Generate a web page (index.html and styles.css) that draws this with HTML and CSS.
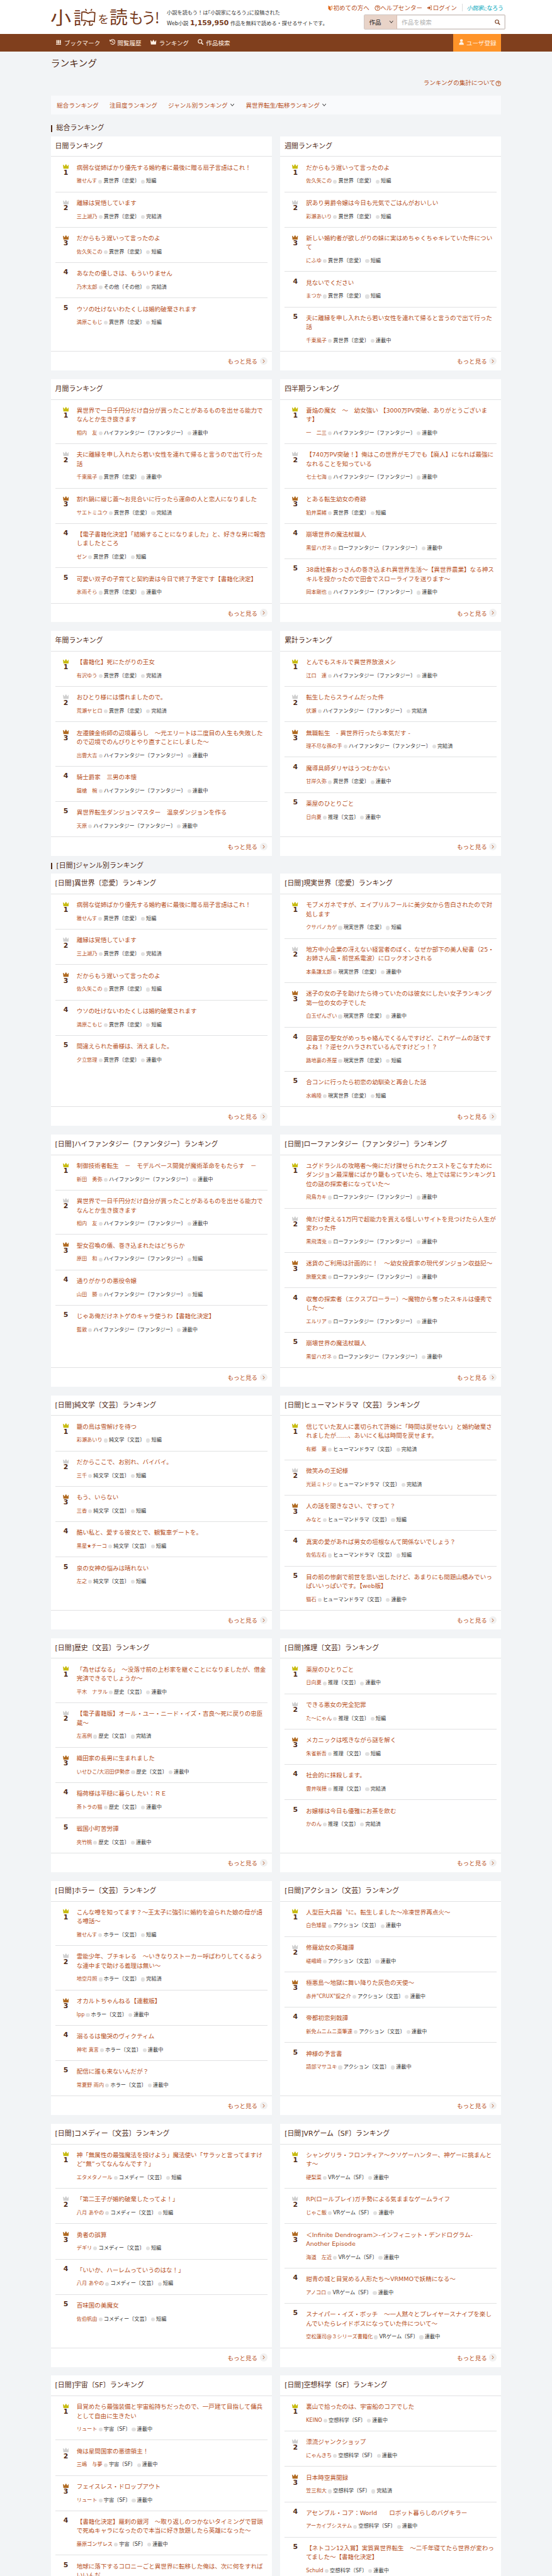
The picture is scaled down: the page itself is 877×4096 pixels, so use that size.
FILE: index.html
```html
<!DOCTYPE html>
<html lang="ja">
<head>
	<meta charset="utf-8">
	<title>ランキング | 小説を読もう！</title>
	<link rel="stylesheet" href="styles.css">
</head>
<body>
	<svg class="defs" width="0" height="0">
		<symbol id="crown" viewBox="0 0 14 11"><path d="M0 1.5h1.4L3.8 5 6.4.3h1.2L10.2 5l2.4-3.5H14L12.8 11H1.2z"/></symbol>
		<symbol id="down" viewBox="0 0 10 8"><path d="M1 1.5l4 5 4-5" fill="none" stroke="#222" stroke-width="1.4"/></symbol>
		<symbol id="right" viewBox="0 0 6 10"><path d="M1 1l3.5 4L1 9" fill="none" stroke="#b35322" stroke-width="1.4"/></symbol>
		<symbol id="search" viewBox="0 0 14 14"><circle cx="5.6" cy="5.6" r="4.3" fill="none" stroke="currentColor" stroke-width="1.7"/><path d="M8.8 8.8l4.2 4.2" stroke="currentColor" stroke-width="2.2"/></symbol>
		<symbol id="help" viewBox="0 0 14 14"><circle cx="7" cy="7" r="5.8" fill="none" stroke="currentColor" stroke-width="1.4"/><path d="M5 5.6C5 3 9 3 9 5.5 9 7 7 6.800 7 8.500M7 9.600v1.400" fill="none" stroke="currentColor" stroke-width="1.5"/></symbol>
	</svg>
	<div class="page">
		<div class="hd">
			<div class="inner">
				<svg class="logo" viewBox="18 40 754 126">
					<clipPath id="half"><path d="M174 40h51v126h-51z"/></clipPath>
					<text transform="translate(14 154) scale(1.16 1)" font-size="126">小</text>
					<text x="175" y="153" font-size="122" clip-path="url(#half)">説</text>
					<g class="book">
						<path d="M234 68q24-6 43 8 22-13 48-4l-4 62q-22-8-43 0-22-12-46-8zM259 46l7 12M304 46l-7 12M258 136q-1 18-14 26M288 136v23h12q8 0 8-11"/>
					</g>
					<text x="346" y="145" font-size="77">を</text>
					<text x="427" y="152" font-size="127">読</text>
					<text x="562 649 744" y="145" font-size="103">もう!</text>
				</svg>
				<div class="desc">
					<p>小説を読もう！は｢小説家になろう｣に投稿された</p>
					<p>Web小説 <strong>1,159,950</strong> 作品を無料で読める・探せるサイトです。</p>
				</div>
				<div class="tools">
					<div class="links">
						<a href="#"><svg viewBox="0 0 10 14"><path d="M0 1l5 3.500 5-3.500v9l-5 4-5-4z" fill="#e06a1c"/><path d="M5.800 5l3-2v6.400l-3 2.400z" fill="#fff"/></svg>初めての方へ</a>
						<a href="#"><svg class="wide"><use href="#help"/></svg>ヘルプセンター</a>
						<a href="#"><svg viewBox="0 0 12 12"><path d="M0 4.500h4V1.500L9 6l-5 4.500v-3H0z" fill="currentColor"/><path d="M7 1h4v10H7" fill="none" stroke="currentColor" stroke-width="1.500"/></svg>ログイン</a>
						<a href="#" class="narou"><i>小説家</i><small>に</small>なろう</a>
					</div>
					<div class="search">
						<span class="sel">作品<svg><use href="#down"/></svg></span>
						<span class="ph">作品を検索</span>
						<svg class="mag"><use href="#search"/></svg>
					</div>
				</div>
			</div>
		</div>
		<div class="nav">
			<div class="inner">
				<a href="#"><svg class="i1" viewBox="0 0 12 12"><path d="M1 1h2.600v8.500H1zM4.800 1h2.600v8.500H4.800zM8.600 1h2.600v8.500H8.600zM0 10.300h12V12H0z"/></svg>ブックマーク</a>
				<a href="#"><svg class="i2" viewBox="0 0 14 14"><path d="M2 4.500A5.600 5.600 0 1 1 2.500 10M0 1.500L1.500 5.500 5.500 4.500M7.300 3.800v3.700l2.500 1.500" fill="none" stroke="currentColor" stroke-width="1.500"/></svg>閲覧履歴</a>
				<a href="#"><svg class="i3"><use href="#crown"/></svg>ランキング</a>
				<a href="#"><svg class="i4"><use href="#search"/></svg>作品検索</a>
				<a href="#" class="user"><svg class="i5" viewBox="0 0 12 14"><circle cx="6" cy="3.600" r="3.300"/><path d="M.500 13.500q0-6 5.500-6t5.500 6z"/></svg>ユーザ登録</a>
			</div>
		</div>
		<div class="inner main">
			<h1>ランキング</h1>
			<p class="about"><a href="#">ランキングの集計について<svg><use href="#help"/></svg></a></p>
			<div class="tabs">
				<a href="#">総合ランキング</a>
				<a href="#">注目度ランキング</a>
				<a href="#">ジャンル別ランキング<svg><use href="#down"/></svg></a>
				<a href="#">異世界転生/転移ランキング<svg><use href="#down"/></svg></a>
			</div>
			<h2>総合ランキング</h2>
			<div class="cards" id="total"></div>
			<h2 class="second">[日間]ジャンル別ランキング</h2>
			<div class="cards" id="genre"></div>
		</div>
	</div>
	<script src="ranking.js"></script>
</body>
</html>
```
FILE: styles.css
```css
/* 1rem = 10 units of the 1284 wide layout */
html{
	font-size:6.827px;
}
body,h1,h2,h3,p,ol,li{
	margin:0;
	padding:0;
}
body{
	background-color:#f2f4f6;
	color:#333;
	font-family:"DejaVu Sans","Noto Sans CJK JP",sans-serif;
	font-size:1.4rem;
}
a{
	color:#b7501c;
	text-decoration:none;
}
svg{
	flex:none;
	fill:currentColor;
}
.defs{
	position:absolute;
}
.page{
	height:4096px;
	overflow:hidden;
}
.inner{
	width:104.8rem;
	margin:0 auto;
	display:flex;
}

/* header */
.hd{
	height:7.9rem;
	background-color:#fff;
}
.logo{
	width:25.1rem;
	height:4.2rem;
	margin-top:1.84rem;
	overflow:visible;
	fill:#773b1d;
	font-family:"Noto Sans CJK JP",sans-serif;
}
.book path{
	fill:none;
	stroke:#773b1d;
	stroke-width:8;
}
.desc{
	margin:1.7rem 0 0 1.9rem;
	font-size:1.2rem;
	line-height:2.6rem;
	white-space:nowrap;
}
.desc strong{
	font-size:1.6rem;
	line-height:1;
	color:#773b1d;
}
.tools{
	margin-left:auto;
}
.links{
	display:flex;
	justify-content:flex-end;
	align-items:center;
	height:1.8rem;
	margin-top:.9rem;
	white-space:nowrap;
}
.links a{
	display:flex;
	align-items:center;
	margin-right:1.15rem;
}
.links svg{
	width:1.1rem;
	height:1.3rem;
	margin-right:.2rem;
}
.links .wide{
	width:1.4rem;
	height:1.4rem;
	margin-right:0;
}
.links .narou{
	height:1.8rem;
	margin:0;
	padding-left:1rem;
	border-left:1px solid #ddd;
	color:#35b6c8;
	font-size:1.3rem;
	font-weight:500;
	width:9rem;
	letter-spacing:-.02em;
}
.narou small{
	font-size:.9rem;
	padding-top:.5rem;
}
.search{
	display:flex;
	align-items:center;
	box-sizing:border-box;
	width:33rem;
	height:3.5rem;
	margin:.7rem 0 0 auto;
	border:1px solid #cfc6c2;
	border-radius:2px;
	box-shadow:0 0 0 .5px #cfc6c2 inset;
}
.sel{
	display:flex;
	align-items:center;
	justify-content:space-between;
	box-sizing:border-box;
	width:7.7rem;
	height:100%;
	padding:0 .7rem 0 1.15rem;
	background-color:#e8d3c8;
	border-right:1px solid #d9bfb2;
	color:#222;
}
.sel svg{
	width:1.1rem;
	height:.8rem;
}
.ph{
	margin-left:1rem;
	color:#b0b0b0;
}
.mag{
	width:1.3rem;
	height:1.3rem;
	margin:0 1.1rem 0 auto;
	color:#773b1d;
}

/* navigation */
.nav{
	height:4.1rem;
	background-color:#803f1d;
}
.nav .inner{
	height:100%;
	align-items:center;
}
.nav a{
	display:flex;
	align-items:center;
	color:#fff1e4;
	margin-right:2.1rem;
}
.nav svg{
	width:1.4rem;
	height:1.4rem;
	margin:-.2rem .5rem 0 0;
}
.nav .i1{
	width:1.2rem;
	height:1.2rem;
	margin-left:1.2rem;
	margin-right:.7rem;
}
.nav .i3{
	height:1.2rem;
	margin-right:.6rem;
}
.nav .user{
	box-sizing:border-box;
	width:11.1rem;
	height:100%;
	margin:0 0 0 auto;
	padding-left:1.2rem;
	background-color:#ff9429;
}
.nav .i5{
	width:1.2rem;
	margin-right:.6rem;
}

/* page title and tabs */
.main{
	display:block;
}
h1{
	padding-top:1.2rem;
	font-size:2.16rem;
	line-height:3.2rem;
	font-weight:normal;
	color:#512b17;
}
.about{
	display:flex;
	justify-content:flex-end;
	margin-top:1.95rem;
	line-height:2.1rem;
}
.about a{
	display:flex;
	align-items:center;
}
.about svg{
	width:1.4rem;
	height:1.4rem;
}
.tabs{
	display:flex;
	gap:2.5rem;
	height:4.35rem;
	margin-top:1.8rem;
	padding-left:1.4rem;
	align-items:center;
	background-color:#f9fafc;
}
.tabs a{
	display:flex;
	align-items:center;
	white-space:nowrap;
}
.tabs svg{
	width:1.2rem;
	height:.8rem;
	margin-left:.5rem;
}
h2{
	margin:2.55rem 0 1.05rem;
	padding-left:1rem;
	border-left:.3rem solid #512b17;
	font-size:1.6rem;
	line-height:1.55rem;
	font-weight:normal;
	color:#512b17;
}
h2.second{
	margin-top:1.57rem;
	margin-bottom:1rem;
}

/* ranking cards */
.cards{
	display:grid;
	grid-template-columns:1fr 1fr;
	gap:2rem;
}
.card{
	display:flex;
	flex-direction:column;
	background-color:#fff;
}
.card h3{
	box-sizing:border-box;
	height:4.8rem;
	padding:0 1rem;
	border-bottom:1px solid #e1e2e3;
	font-size:1.6rem;
	line-height:4.6rem;
	font-weight:normal;
	color:#512b17;
}
.card ol{
	flex:1;
	list-style:none;
	padding:0 1rem;
}
.card li{
	display:flex;
	box-sizing:border-box;
	padding:1.5rem 0 1.61rem;
	border-bottom:1px solid #e1e2e3;
}
.card li:last-child{
	border-bottom:0;
}
.rank{
	width:5rem;
	flex:none;
	text-align:center;
	font-size:1.6rem;
	line-height:1.6rem;
	font-weight:bold;
	color:#512b17;
}
.rank svg{
	display:block;
	width:1.4rem;
	height:1.1rem;
	margin:.25rem auto .15rem;
}
.rank .c1{color:#c8bb10;}
.rank .c2{color:#cfcfcf;}
.rank .c3{color:#b06a20;}
.work{
	width:44.2rem;
}
.work a{
	display:block;
	line-height:2.1rem;
}
.work p{
	display:flex;
	align-items:center;
	margin-top:1.08rem;
	font-size:1.2rem;
	line-height:1.8rem;
	white-space:pre;
}
.work p a{
	line-height:1.8rem;
}
.work b{
	width:.9rem;
	height:.9rem;
	margin:.3rem .3rem 0;
	border-radius:50%;
	background-color:#e0e0e0;
}
.more{
	display:flex;
	align-items:center;
	justify-content:flex-end;
	box-sizing:border-box;
	height:4.53rem;
	padding-right:1rem;
	border-top:1px solid #e1e2e3;
}
.more span{
	display:flex;
	align-items:center;
	justify-content:center;
	width:1.8rem;
	height:1.8rem;
	margin-left:.5rem;
	border-radius:50%;
	background-color:#f1f1f1;
}
.more svg{
	width:.6rem;
	height:1rem;
}
```
FILE: ranking.js
```javascript
var R = "異世界〔恋愛〕", H = "ハイファンタジー〔ファンタジー〕", L = "ローファンタジー〔ファンタジー〕",
	T = "短編", K = "完結済", S = "連載中";

// [title, author, genre, status]
var total = [
	["日間ランキング",
		["病弱な従姉ばかり優先する婚約者に最後に贈る扇子言語はこれ！", "雅せんす", R, T],
		["離縁は覚悟しています", "三上湖乃", R, K],
		["だからもう遅いって言ったのよ", "佐久矢この", R, T],
		["あなたの優しさは、もういりません", "乃木太郎", "その他〔その他〕", K],
		["ウソの吐けないわたくしは婚約破棄されます", "満原こもじ", R, T]],
	["週間ランキング",
		["だからもう遅いって言ったのよ", "佐久矢この", R, T],
		["訳あり男爵令嬢は今日も元気でごはんがおいしい", "彩瀬あいり", R, T],
		["新しい婚約者が欲しがりの妹に実はめちゃくちゃキレていた件について", "にふゆ", R, T],
		["見ないでください", "まつか", R, T],
		["夫に離縁を申し入れたら若い女性を連れて帰ると言うので出て行った話", "千東風子", R, S]],
	["月間ランキング",
		["異世界で一日千円分だけ自分が買ったことがあるものを出せる能力でなんとか生き抜きます", "相内　友", H, S],
		["夫に離縁を申し入れたら若い女性を連れて帰ると言うので出て行った話", "千東風子", R, S],
		["割れ鍋に綴じ蓋～お見合いに行ったら運命の人と恋人になりました", "サエトミユウ", R, K],
		["【電子書籍化決定】「結婚することになりました」と、好きな男に報告しましたところ", "ゼン", R, T],
		["可愛い双子の子育てと契約妻は今日で終了予定です【書籍化決定】", "氷雨そら", R, S]],
	["四半期ランキング",
		["蒼焔の魔女　～　幼女強い 【3000万PV突破、ありがとうございます】", "一　二三", H, S],
		["【740万PV突破！】俺はこの世界がモブでも【廃人】になれば最強になれることを知っている", "七士七海", H, S],
		["とある転生幼女の奇跡", "狛井菜緒", R, T],
		["崩壊世界の魔法杖職人", "黒留ハガネ", L, S],
		["38歳社畜おっさんの巻き込まれ異世界生活～【異世界農業】なる神スキルを授かったので田舎でスローライフを送ります～", "岡本剛也", H, S]],
	["年間ランキング",
		["【書籍化】死にたがりの王女", "有沢ゆう", R, K],
		["おひとり様には慣れましたので。", "荒瀬ヤヒロ", R, K],
		["左遷錬金術師の辺境暮らし　～元エリートは二度目の人生も失敗したので辺境でのんびりとやり直すことにしました～", "出雲大吉", H, S],
		["騎士爵家　三男の本懐", "龍槍　椀", H, S],
		["異世界転生ダンジョンマスター　温泉ダンジョンを作る", "天原", H, S]],
	["累計ランキング",
		["とんでもスキルで異世界放浪メシ", "江口　連", H, S],
		["転生したらスライムだった件", "伏瀬", H, K],
		["無職転生　- 異世界行ったら本気だす -", "理不尽な孫の手", H, K],
		["魔導具師ダリヤはうつむかない", "甘岸久弥", R, S],
		["薬屋のひとりごと", "日向夏", "推理〔文芸〕", S]]
];

// genre cards: every work has the genre of its card, so [title, author, status]
var genre = [
	[R,
		["病弱な従姉ばかり優先する婚約者に最後に贈る扇子言語はこれ！", "雅せんす", T],
		["離縁は覚悟しています", "三上湖乃", K],
		["だからもう遅いって言ったのよ", "佐久矢この", T],
		["ウソの吐けないわたくしは婚約破棄されます", "満原こもじ", T],
		["間違えられた番様は、消えました。", "夕立悠理", S]],
	["現実世界〔恋愛〕",
		["モブメガネですが、エイプリルフールに美少女から告白されたので対処します", "クサバノカゲ", T],
		["地方中小企業の冴えない経営者のぼく、なぜか部下の美人秘書（25・お姉さん風・前世系電波）にロックオンされる", "本条謙太郎", S],
		["迷子の女の子を助けたら待っていたのは彼女にしたい女子ランキング第一位の女の子でした", "白玉ぜんざい", S],
		["図書室の聖女がめっちゃ絡んでくるんですけど、これゲームの話ですよね！？逆セクハラされているんですけどっ！？", "路地裏の茶屋", T],
		["合コンに行ったら初恋の幼馴染と再会した話", "水嶋陸", T]],
	[H,
		["制御技術者転生　－　モデルベース開発が魔術革命をもたらす　－", "新田　勇弥", S],
		["異世界で一日千円分だけ自分が買ったことがあるものを出せる能力でなんとか生き抜きます", "相内　友", S],
		["聖女召喚の儀、巻き込まれたはどちらか", "原田　和", T],
		["通りがかりの悪役令嬢", "山田　勝", T],
		["じゃあ俺だけネトゲのキャラ使うわ【書籍化決定】", "藍敦", S]],
	[L,
		["ユグドラシルの攻略者～俺にだけ課せられたクエストをこなすためにダンジョン最深層にばかり籠もっていたら、地上では常にランキング1位の謎の探索者になっていた～", "飛鳥カキ", S],
		["俺だけ使える1万円で超能力を買える怪しいサイトを見つけたら人生が変わった件", "黒飛清兎", S],
		["迷貨のご利用は計画的に！　～幼女投資家の現代ダンジョン収益記～", "旅籠文楽", S],
		["収奪の探索者（エクスプローラー）～魔物から奪ったスキルは優秀でした～", "エルリア", S],
		["崩壊世界の魔法杖職人", "黒留ハガネ", S]],
	["純文学〔文芸〕",
		["籠の鳥は雪解けを待つ", "彩瀬あいり", T],
		["だからここで、お別れ、バイバイ。", "三千", T],
		["もう、いらない", "三香", T],
		["酷い私と、愛する彼女とで、観覧車デートを。", "黒星★チーコ", T],
		["泉の女神の悩みは晴れない", "左之", T]],
	["ヒューマンドラマ〔文芸〕",
		["信じていた友人に裏切られて許婚に「時間は戻せない」と婚約破棄されましたが……、あいにく私は時間を戻せます。", "有郷　葉", K],
		["微笑みの王妃様", "光延ミトジ", K],
		["人の話を聞きなさい、ですって？", "みなと", T],
		["真実の愛があれば男女の垣根なんて関係ないでしょう？", "佐佑左右", T],
		["目の前の惨劇で前世を思い出したけど、あまりにも問題山積みでいっぱいいっぱいです。【web版】", "猫石", S]],
	["歴史〔文芸〕",
		["「為せばなる」　～没落寸前の上杉家を継ぐことになりましたが、借金完済できるでしょうか～", "平木　ナヲル", S],
		["【電子書籍版】オール・ユー・ニード・イズ・吉良～死に戻りの忠臣蔵～", "左高例", K],
		["織田家の長男に生まれました", "いせひこ/大沼田伊勢彦", S],
		["稲荷様は平穏に暮らしたい：ＲＥ", "茶トラの猫", S],
		["戦国小町苦労譚", "夾竹桃", S]],
	["推理〔文芸〕",
		["薬屋のひとりごと", "日向夏", S],
		["できる悪女の完全犯罪", "た～にゃん", T],
		["メカニックは呟きながら謎を解く", "朱雀新吾", T],
		["社会的に抹殺します。", "雲井咲穂", K],
		["お嬢様は今日も優雅にお茶を飲む", "かのん", K]],
	["ホラー〔文芸〕",
		["こんな噂を知ってます？～王太子に強引に婚約を迫られた娘の母が語る噂話～", "雅せんす", T],
		["霊能少年、ブチキレる　～いきなりストーカー呼ばわりしてくるような連中まで助ける義理は無い～", "地空月照", K],
		["オカルトちゃんねる【連載版】", "lpp", S],
		["溺るるは慟哭のヴィクティム", "神宅 真言", S],
		["配信に誰も来ないんだが？", "常夏野 雨内", S]],
	["アクション〔文芸〕",
		["人型巨大兵器〝に〟転生しました～冷凍世界再点火～", "白色矮星", S],
		["修羅幼女の英雄譚", "嵯峨崎", S],
		["極悪島～地獄に舞い降りた灰色の天使～", "赤井\"CRUX\"錠之介", S],
		["帝都初恋剣戟譚", "新免ムニムニ斎筆達", S],
		["神様の予言書", "語部マサユキ", S]],
	["コメディー〔文芸〕",
		["神「無属性の最強魔法を授けよう」魔法使い「サラッと言ってますけど“無”ってなんなんです？」", "エタメタノール", T],
		["「第二王子が婚約破棄したってよ！」", "八月 あやの", T],
		["勇者の誤算", "デギリ", T],
		["「いいか、ハーレムっていうのはな！」", "八月 あやの", T],
		["百味国の美魔女", "佐伯帆由", T]],
	["VRゲーム〔SF〕",
		["シャングリラ・フロンティア～クソゲーハンター、神ゲーに挑まんとす～", "硬梨菜", S],
		["RP(ロールプレイ)ガチ勢による気ままなゲームライフ", "じゃこ飯", S],
		["＜Infinite Dendrogram＞-インフィニット・デンドログラム-<br>Another Episode", "海道　左近", S],
		["紺青の城と目覚める人形たち～VRMMOで妖精になる～", "アノコロ", S],
		["スナイパー・イズ・ボッチ　～一人黙々とプレイヤースナイプを楽しんでいたらレイドボスになっていた件について～", "空松蓮司@３シリーズ書籍化", S]],
	["宇宙〔SF〕",
		["目覚めたら最強装備と宇宙船持ちだったので、一戸建て目指して傭兵として自由に生きたい", "リュート", S],
		["俺は星間国家の悪徳領主！", "三嶋　与夢", S],
		["フェイスレス・ドロップアウト", "リュート", S],
		["【書籍化決定】羅刹の銀河　～取り返しのつかないタイミングで冒頭で死ぬキャラになったので本当に好き放題したら英雄になった～", "藤原ゴンザレス", S],
		["地球に落下するコロニーごと異世界に転移した俺は、次に何をすればいいんだ……", "地球人", S]],
	["空想科学〔SF〕",
		["裏山で拾ったのは、宇宙船のコアでした", "KEINO", S],
		["漂流ジャンクショップ", "にゃんきち", S],
		["日本時空異聞録", "笠三和大", K],
		["アセンブル・コア：World　　ロボット暮らしのバグキラー", "アーカイブシステム", S],
		["【ネトコン12入賞】実質異世界転生　～二千年寝てたら世界が変わってました～【書籍化決定】", "Schuld", S]]
];

function card(title, works) {
	var html = '<div class="card"><h3>' + title + '</h3><ol>';
	works.forEach(function (w, i) {
		html += '<li><div class="rank">' +
			(i < 3 ? '<svg class="c' + (i + 1) + '"><use href="#crown"/></svg>' : '') + (i + 1) + '</div>' +
			'<div class="work"><a href="#">' + w[0] + '</a>' +
			'<p><a href="#">' + w[1] + '</a><b></b>' + w[2] + '<b></b>' + w[3] + '</p></div></li>';
	});
	return html + '</ol><a class="more" href="#">もっと見る<span><svg><use href="#right"/></svg></span></a></div>';
}

document.getElementById("total").innerHTML = total.map(function (c) {
	return card(c[0], c.slice(1));
}).join("");

document.getElementById("genre").innerHTML = genre.map(function (c) {
	return card("[日間]" + c[0] + "ランキング", c.slice(1).map(function (w) {
		return [w[0], w[1], c[0], w[2]];
	}));
}).join("");
```
